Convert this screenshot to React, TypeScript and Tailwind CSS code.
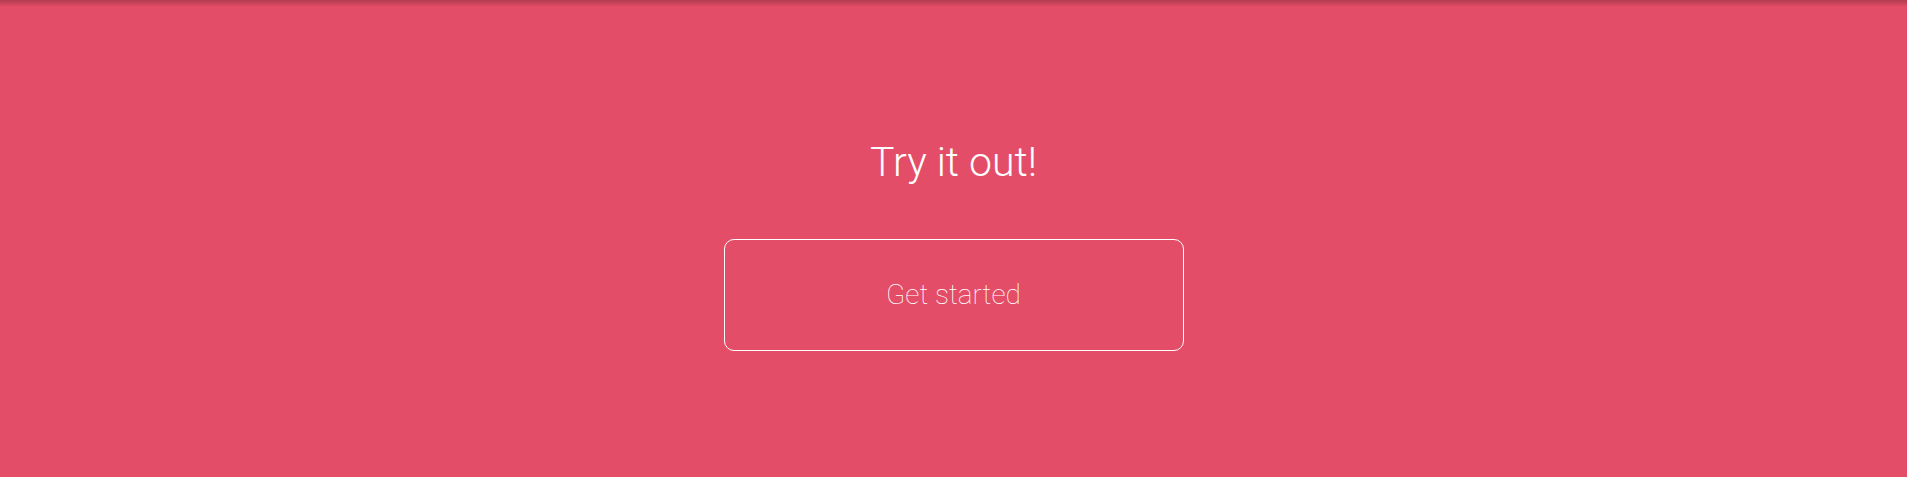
import React from "react";

const App = () => {
  return (
    <section
      className="h-[477px] w-full bg-[#e44d67] bg-[linear-gradient(to_bottom,rgba(0,0,0,0.22),rgba(0,0,0,0)_7px)] text-white"
      style={{ fontFamily: "Roboto, 'Liberation Sans', sans-serif" }}
    >
      <div className="flex flex-col items-center pt-[142px]">
        {/* Call to action */}
        <h2 className="text-[41px] font-light leading-none">Try it out!</h2>
        <button className="mt-[56px] flex h-[112px] w-[460px] items-center justify-center rounded-[10px] border border-white text-[28px] font-thin leading-none text-white">
          Get started
        </button>
      </div>
    </section>
  );
};

export default App;
